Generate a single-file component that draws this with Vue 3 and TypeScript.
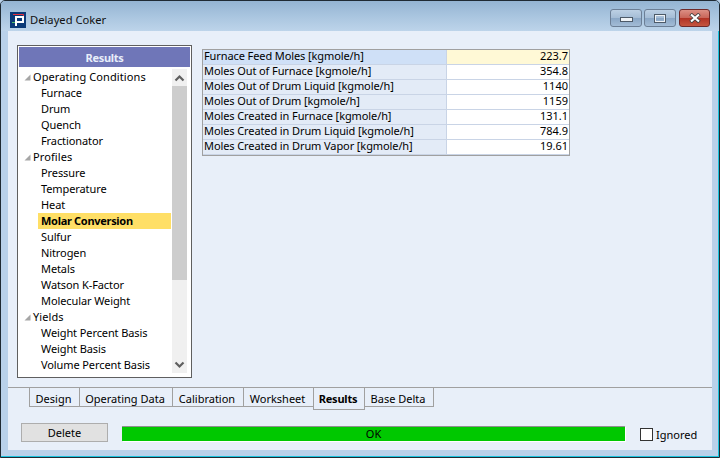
<script setup lang="ts">
interface TreeRow {
  label: string
  group?: boolean
  active?: boolean
}

interface ResultRow {
  label: string
  value: string
}

interface Tab {
  label: string
  width: number
}

const treeRows: TreeRow[] = [
  { label: 'Operating Conditions', group: true },
  { label: 'Furnace' },
  { label: 'Drum' },
  { label: 'Quench' },
  { label: 'Fractionator' },
  { label: 'Profiles', group: true },
  { label: 'Pressure' },
  { label: 'Temperature' },
  { label: 'Heat' },
  { label: 'Molar Conversion', active: true },
  { label: 'Sulfur' },
  { label: 'Nitrogen' },
  { label: 'Metals' },
  { label: 'Watson K-Factor' },
  { label: 'Molecular Weight' },
  { label: 'Yields', group: true },
  { label: 'Weight Percent Basis' },
  { label: 'Weight Basis' },
  { label: 'Volume Percent Basis' },
]

const resultRows: ResultRow[] = [
  { label: 'Furnace Feed Moles [kgmole/h]', value: '223.7' },
  { label: 'Moles Out of Furnace [kgmole/h]', value: '354.8' },
  { label: 'Moles Out of Drum Liquid [kgmole/h]', value: '1140' },
  { label: 'Moles Out of Drum [kgmole/h]', value: '1159' },
  { label: 'Moles Created in Furnace [kgmole/h]', value: '131.1' },
  { label: 'Moles Created in Drum Liquid [kgmole/h]', value: '784.9' },
  { label: 'Moles Created in Drum Vapor [kgmole/h]', value: '19.61' },
]

const tabs: Tab[] = [
  { label: 'Design', width: 51 },
  { label: 'Operating Data', width: 94 },
  { label: 'Calibration', width: 72 },
  { label: 'Worksheet', width: 71 },
  { label: 'Results', width: 52 },
  { label: 'Base Delta', width: 70 },
]
</script>

<template>
  <div class="window">
    <header class="titlebar">
      <svg class="app-icon" width="16" height="16" viewBox="0 0 16 16">
        <rect width="16" height="16" fill="#0b3a78" />
        <path d="M3 2.500h10.500V5" fill="none" stroke="#e8303c" stroke-width="1" />
        <path d="M6 14V5h7v5H6" fill="none" stroke="#fff" stroke-width="2" />
        <path d="M2 10h3v1H2z" fill="#4fc06a" />
      </svg>
      <span class="title">Delayed Coker</span>
      <div class="controls">
        <button class="ctl">
          <span class="ctl-min"></span>
        </button>
        <button class="ctl">
          <span class="ctl-max"></span>
        </button>
        <button class="ctl ctl-close">
          <svg width="14" height="10" viewBox="0 0 14 10">
            <path d="M2.500 1 11.500 9M11.500 1 2.500 9" stroke="#3d3d3d" stroke-width="3.600" fill="none" />
            <path d="M3 1.500 11 8.500M11 1.500 3 8.500" stroke="#fff" stroke-width="2.200" fill="none" />
          </svg>
        </button>
      </div>
    </header>

    <main class="client">
      <div class="content">
        <aside class="tree">
          <div class="tree-head">Results</div>
          <div class="tree-body">
            <ul class="tree-list">
              <li
                v-for="row in treeRows"
                :key="row.label"
                class="tree-row"
                :class="{ 'is-group': row.group, 'is-active': row.active }"
              >
                <svg v-if="row.group" class="caret" width="7" height="7" viewBox="0 0 7 7">
                  <path d="M6.500 0.500V6.500H0.500Z" fill="#a6a6a6" />
                </svg>
                <span>{{ row.label }}</span>
              </li>
            </ul>
            <div class="scrollbar">
              <div class="arrow">
                <svg width="11" height="8" viewBox="0 0 11 8">
                  <path d="M1.500 6.500 5.500 2.500 9.500 6.500" fill="none" stroke="#5f5f5f" stroke-width="2.200" />
                </svg>
              </div>
              <div class="thumb"></div>
              <div class="track"></div>
              <div class="arrow">
                <svg width="11" height="8" viewBox="0 0 11 8">
                  <path d="M1.500 1.500 5.500 5.500 9.500 1.500" fill="none" stroke="#5f5f5f" stroke-width="2.200" />
                </svg>
              </div>
            </div>
          </div>
        </aside>

        <section class="grid">
          <div
            v-for="(row, i) in resultRows"
            :key="row.label"
            class="grid-row"
            :class="{ 'is-current': i === 0 }"
          >
            <div class="grid-label">{{ row.label }}</div>
            <div class="grid-value">{{ row.value }}</div>
          </div>
        </section>
      </div>

      <nav class="tabs">
        <div
          v-for="tab in tabs"
          :key="tab.label"
          class="tab"
          :class="{ 'is-selected': tab.label === 'Results' }"
          :style="{ width: tab.width + 'px' }"
        >
          {{ tab.label }}
        </div>
      </nav>

      <footer class="footer">
        <button class="delete">Delete</button>
        <div class="status">OK</div>
        <label class="ignored">
          <span class="checkbox"></span>
          <span>Ignored</span>
        </label>
      </footer>
    </main>
  </div>
</template>

<style>
html,
body {
  margin: 0;
  background: #b9d1ea;
}
</style>

<style scoped>
.window {
  box-sizing: border-box;
  width: 720px;
  height: 458px;
  display: flex;
  flex-direction: column;
  padding: 0 7px 7px 7px;
  background: #b9d1ea;
  border: 1px solid #1f2a33;
  border-radius: 5px 5px 0 0;
  box-shadow: inset -1px -1px 0 #19c3de;
  font-family: Tahoma, "Noto Sans", "Liberation Sans", sans-serif;
  font-size: 11px;
  color: #000;
}

.titlebar {
  flex: none;
  height: 30px;
  margin: 0 -7px;
  padding: 0 9px;
  display: flex;
  align-items: center;
  background: linear-gradient(180deg, #94b4d2 0%, #a9c5df 50%, #bdd4ea 100%);
  border-radius: 4px 4px 0 0;
}

.app-icon {
  flex: none;
  margin-top: 7px;
}

.title {
  margin: 7px 0 0 4px;
  font-size: 11.2px;
  color: #111;
}

.controls {
  margin: 4px 0 0 auto;
  display: flex;
  gap: 2px;
}

.ctl {
  box-sizing: border-box;
  width: 32px;
  height: 18px;
  padding: 0;
  display: flex;
  align-items: center;
  justify-content: center;
  border: 1px solid #6c7f96;
  border-radius: 3px;
  background: linear-gradient(180deg, #bcd0e4 0%, #a5bdd6 48%, #8aa7c6 52%, #a3bcd6 100%);
}

.ctl-min {
  width: 11px;
  height: 3px;
  margin-top: 3px;
  background: #eef2f6;
  border: 1px solid #4d5a68;
}

.ctl-max {
  box-sizing: border-box;
  width: 12px;
  height: 9px;
  background: transparent;
  border: 2px solid #eef2f6;
  outline: 1px solid #4d5a68;
  outline-offset: -1px;
}

.ctl-close {
  width: 31px;
  margin-left: 1px;
  border-color: #6f2a2a;
  background: linear-gradient(180deg, #dc8f84 0%, #c9665a 48%, #b23325 52%, #c4553f 100%);
}

.client {
  flex: 1;
  min-height: 0;
  display: flex;
  flex-direction: column;
  background: #e8eff9;
}

.content {
  height: 357px;
  flex: none;
  box-sizing: border-box;
  padding: 14px 0 0 9px;
  display: flex;
  align-items: flex-start;
  gap: 10px;
  border-bottom: 1px solid #a0a0a0;
}

.tree {
  box-sizing: border-box;
  width: 175px;
  height: 333px;
  border: 1px solid #5f5f5f;
  background: #fff;
  padding: 1px;
  flex: none;
}

.tree-head {
  height: 20px;
  line-height: 21px;
  background: #6f76b8;
  color: #e8eefa;
  font-weight: 700;
  text-align: center;
  letter-spacing: -0.3px;
}

.tree-body {
  display: flex;
  padding: 2px 3px 0 0;
}

.tree-list {
  flex: 1;
  margin: 0;
  padding: 0;
  list-style: none;
}

.tree-row {
  position: relative;
  height: 16px;
  line-height: 16px;
  margin-left: 19px;
  padding-left: 3px;
  white-space: nowrap;
  letter-spacing: -0.1px;
}

.tree-row.is-group {
  padding-left: 0;
  margin-left: 14px;
  letter-spacing: 0.1px;
}

.tree-row.is-active {
  background: #ffdf66;
  font-weight: 700;
  letter-spacing: -0.3px;
}

.caret {
  position: absolute;
  left: -9px;
  top: 5px;
}

.scrollbar {
  flex: none;
  width: 15px;
  height: 304px;
  margin-left: 1px;
  display: flex;
  flex-direction: column;
  background: #f0f0f0;
}

.arrow {
  flex: none;
  height: 17px;
  display: flex;
  align-items: center;
  justify-content: center;
}

.thumb {
  flex: none;
  height: 194px;
  background: #cdcdcd;
}

.track {
  flex: 1;
}

.grid {
  box-sizing: border-box;
  width: 368px;
  margin-top: 4px;
  border: 1px solid #a0a0a0;
  background: #e8eff9;
  flex: none;
}

.grid-row {
  display: flex;
  height: 15px;
  line-height: 12px;
  border-bottom: 1px solid #c9d4e6;
  box-sizing: border-box;
}

.grid-label {
  box-sizing: border-box;
  width: 244px;
  padding-left: 1px;
  background: #e3ebf7;
  border-right: 1px solid #c9d4e6;
  white-space: nowrap;
  letter-spacing: -0.1px;
}

.grid-value {
  flex: 1;
  padding-right: 1px;
  background: #fff;
  text-align: right;
}

.is-current .grid-label {
  background: #cfe0f7;
}

.is-current .grid-value {
  background: #fff9d6;
}

.tabs {
  flex: none;
  display: flex;
  align-items: flex-start;
  padding-left: 21px;
  height: 35px;
}

.tab {
  box-sizing: border-box;
  height: 19px;
  padding-right: 2px;
  line-height: 22px;
  text-align: center;
  border: 1px solid #a0a0a0;
  border-top: none;
  margin-left: -1px;
  white-space: nowrap;
}

.tab:first-child {
  margin-left: 0;
}

.tab.is-selected {
  height: 22px;
  font-weight: 700;
  letter-spacing: -0.2px;
  background: #e8eff9;
}

.footer {
  flex: none;
  display: flex;
  align-items: flex-start;
  padding-left: 13px;
}

.delete {
  box-sizing: border-box;
  width: 87px;
  height: 19px;
  padding: 0;
  border: 1px solid #adadad;
  background: #e1e1e1;
  font: inherit;
  color: #000;
}

.status {
  box-sizing: border-box;
  width: 503px;
  height: 15px;
  margin: 3px 0 0 14px;
  border-top: 1px solid #8f8f8f;
  background: #00c800;
  line-height: 13px;
  text-align: center;
  box-shadow: 1px 1px 0 #fff;
}

.ignored {
  display: flex;
  align-items: center;
  gap: 3px;
  margin: 4px 0 0 15px;
}

.checkbox {
  box-sizing: border-box;
  width: 13px;
  height: 13px;
  background: #fff;
  border: 1px solid #333;
}
</style>
